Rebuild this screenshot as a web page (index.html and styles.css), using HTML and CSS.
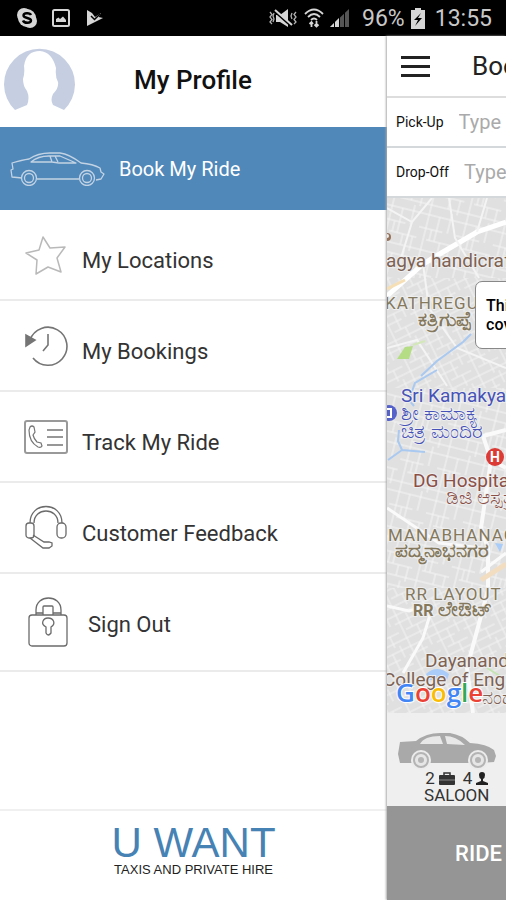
FILE: index.html
```html
<!DOCTYPE html>
<html lang="en">

<head>
    <meta charset="utf-8">
    <meta name="viewport" content="width=device-width, initial-scale=1">
    <title>U Want Taxis</title>
    <link rel="stylesheet" href="styles.css">
</head>

<body>
    <div class="status">
        <svg width="22" height="22" viewBox="0 0 22 22">
            <circle cx="8" cy="8" r="7" fill="#d6d6d6" />
            <circle cx="14" cy="14" r="7" fill="#d6d6d6" />
            <circle cx="11" cy="11" r="9" fill="#d6d6d6" />
            <path d="M15 8C14 5.500 7.500 5.500 7.500 8.500C7.500 11.500 15 10.500 15 13.500C15 16.500 8 16.500 7 13.500" fill="none" stroke="#000" stroke-width="2.400" />
        </svg>
        <svg width="18" height="18" viewBox="0 0 18 18">
            <rect x="1" y="1" width="16" height="16" rx="1.500" fill="none" stroke="#d6d6d6" stroke-width="2" />
            <path d="M4 13V10L6.500 8.500L8 10L11 7.500L14 11V13Z" fill="#d6d6d6" />
        </svg>
        <svg class="play" width="18" height="18" viewBox="0 0 18 18">
            <path d="M1 1L6 4L9 8L15 4L12.500 8L17 9L1 17Z" fill="#d6d6d6" />
            <path d="M5 7L8.500 10.500L14 5" fill="none" stroke="#000" stroke-width="1.500" />
        </svg>
        <div class="status-right">
            <svg width="30" height="20" viewBox="0 0 30 20">
                <path d="M8 7H12L20 1V19L12 14H8Z" fill="#d6d6d6" />
                <path d="M6 3L23 18" stroke="#000" stroke-width="2" />
                <path d="M7 2L24 17" stroke="#d6d6d6" stroke-width="2" />
                <path d="M2 4L4 6.500L2 9L4 11.500L2 14L4 16M6 5L5 8L6 11L5 14M28 4L26 6.500L28 9L26 11.500L28 14L26 16M24 5L23 8L24 11" fill="none" stroke="#b0b0b0" stroke-width="1.300" />
            </svg>
            <svg width="20" height="20" viewBox="0 0 20 20" fill="none" stroke="#d6d6d6" stroke-width="1.800">
                <path d="M1 6Q10 -3 19 6M4 9Q10 3 16 9M7 12Q10 9 13 12" />
                <path d="M7.500 19V14M5.500 16L7.500 14L9 16M12.500 13V18M10.500 16.500L12.500 18.500L14.500 16.500" />
            </svg>
            <svg class="signal" width="20" height="20" viewBox="0 0 20 20">
                <path d="M0 19L19 1V19Z" fill="#555" />
                <path d="M0 19L9 10V19Z" fill="#d6d6d6" />
                <path d="M4.500 14V19M9.500 9V19M14.500 4V19" stroke="#000" />
            </svg>
            <span>96%</span>
            <svg width="14" height="21" viewBox="0 0 14 21">
                <path d="M0 2H4V0H10V2H14V21H0Z" fill="#d6d6d6" />
                <path d="M10 5L3 12H7L4 18L11 10H7Z" fill="#000" />
            </svg>
            <span class="clock">13:55</span>
        </div>
    </div>

    <div class="app">
        <nav class="drawer">
            <div class="profile">
                <svg width="71" height="64" viewBox="0 0 71 64">
                    <path d="M11 62A35.500 35.500 0 1 1 60 62L49 57Q46 52 49 46Q55 40 54 34Q51 29 52 20Q48 4 36 3Q22 3 20 18Q21 25 19 31Q19 38 23 43Q26 50 23 57Z" fill="#c6cfe2" />
                </svg>
                <h1>My Profile</h1>
            </div>
            <a class="item active" href="#">
                <svg width="95" height="34" viewBox="0 0 95 34" fill="none" stroke="#c3d3e4" stroke-width="1.300" stroke-linejoin="round">
                    <path d="M12 26L2 25L1 18L3 17L2 11Q12 8 19 7Q28 1 40 1H50Q59 2 71 11Q83 12 90 16L91 20L94 22L91 27L86 28M27 27H69" />
                    <path d="M21 10Q28 4 39 4H50L66 11H49L42 10ZM40 4L42 10M45 4L48 10" />
                    <circle cx="19" cy="26" r="7.500" />
                    <circle cx="19" cy="26" r="4.500" />
                    <circle cx="77" cy="26" r="7.500" />
                    <circle cx="77" cy="26" r="4.500" />
                </svg>
                <span>Book My Ride</span>
            </a>
            <a class="item" href="#">
                <svg width="44" height="44" viewBox="0 0 44 44" fill="none" stroke="#b9b9b9" stroke-width="1.500" stroke-linejoin="round">
                    <path d="M19 4L26 15L41 14L33 25L37 39L24 34L12 41L13 27L2 20L15 17Z" />
                </svg>
                <span>My Locations</span>
            </a>
            <a class="item" href="#">
                <svg width="44" height="44" viewBox="0 0 44 44" fill="none" stroke="#757575" stroke-width="1.600">
                    <path d="M6 16A19 19 0 1 1 9 34M24 10V21L19 27" />
                    <path d="M2 11V22L11 16Z" fill="#757575" />
                </svg>
                <span>My Bookings</span>
            </a>
            <a class="item" href="#">
                <svg width="44" height="34" viewBox="0 0 44 34" fill="none" stroke="#757575" stroke-width="1.500">
                    <rect x="1" y="1" width="42" height="32" rx="2" stroke="#999" stroke-width="2" />
                    <path d="M23 10H39M23 17H39M23 25H39" />
                    <path d="M6 7Q8 5 10 7L11 12L9 15Q10 19 13 22L17 23L18 26Q17 28 14 27Q5 22 5 10Z" stroke-width="1.200" />
                </svg>
                <span>Track My Ride</span>
            </a>
            <a class="item" href="#">
                <svg width="44" height="46" viewBox="0 0 44 46" fill="none" stroke="#6b6b6b" stroke-width="1.300">
                    <path d="M6 18C6 -4 38 -4 38 18M10 18C10 2 34 2 34 18" />
                    <rect x="2" y="18" width="8" height="15" rx="3" />
                    <rect x="33" y="18" width="9" height="15" rx="4" />
                    <path d="M6 33L19 43H25L28 41V38L25 37H20L9 30" />
                </svg>
                <span>Customer Feedback</span>
            </a>
            <a class="item signout" href="#">
                <svg width="40" height="50" viewBox="0 0 40 50" fill="none" stroke="#6b6b6b" stroke-width="1.300">
                    <rect x="1" y="18" width="38" height="31" rx="3" />
                    <path d="M8 18V13C8 -3 33 -3 33 13V18M15 18V10Q15 9 16 9H24Q25 9 25 10V18" />
                    <path d="M8 16H15M25 16H33" />
                    <path d="M18 30C12 27 15 21 20 21C26 21 28 27 23 30V36Q20 40 18 36Z" />
                </svg>
                <span>Sign Out</span>
            </a>
            <div class="brand">
                <div class="brand-name">U WANT</div>
                <div class="brand-sub">TAXIS AND PRIVATE HIRE</div>
            </div>
        </nav>

        <main class="booking">
            <header>
                <button class="menu" aria-label="Menu"><i></i><i></i><i></i></button>
                <h2>Book My Ride</h2>
            </header>
            <div class="field">
                <label for="pickup">Pick-Up</label>
                <input id="pickup" type="text" placeholder="Type">
            </div>
            <div class="field">
                <label for="dropoff">Drop-Off</label>
                <input id="dropoff" type="text" placeholder="Type">
            </div>

            <div class="map">
                <svg class="tiles" width="100%" height="100%" viewBox="0 0 119 515" preserveAspectRatio="xMinYMin slice">
                    <defs>
                        <pattern id="streets" width="38" height="46" patternUnits="userSpaceOnUse" patternTransform="rotate(14)">
                            <path d="M0 6H38M0 20H24M10 31H38M0 42H38M7 0V46M18 6V31M29 0V20M34 31V46M13 20V31M24 31V42" fill="none" stroke="#f5f5f5" stroke-width="1" />
                        </pattern>
                        <pattern id="lanes" width="30" height="34" patternUnits="userSpaceOnUse" patternTransform="rotate(-26)">
                            <path d="M0 5H30M0 13H20M8 22H30M0 30H30M5 0V34M15 5V22M25 0V13M20 22V34" fill="none" stroke="#f3f3f3" stroke-width="1" />
                        </pattern>
                    </defs>
                    <rect width="119" height="515" fill="#e0e0e0" />
                    <rect width="119" height="80" fill="url(#streets)" />
                    <rect y="80" width="119" height="110" fill="url(#lanes)" />
                    <rect y="190" width="119" height="200" fill="url(#streets)" />
                    <rect y="390" width="119" height="125" fill="url(#lanes)" />
                    <path d="M0 98L36 66L56 54L90 34L119 24" fill="none" stroke="#fff" stroke-width="5" />
                    <path d="M0 91L18 82" stroke="#f6dfb5" stroke-width="3" />
                    <path d="M0 10L25 24L45 0M25 24L14 60M62 0L68 40L92 80M100 0L90 34" fill="none" stroke="#f4f4f4" stroke-width="2" />
                    <path d="M36 66L42 110L70 150L119 170M0 150L30 142L60 188" fill="none" stroke="#f4f4f4" stroke-width="2" />
                    <path d="M119 232L96 238L104 262L119 270M104 262L94 330L101 350V392L80 470L86 515" fill="none" stroke="#fafafa" stroke-width="4" />
                    <path d="M0 408L22 413L42 407M45 410L36 440L16 475M94 374L119 355M0 310L52 345L94 350" fill="none" stroke="#fafafa" stroke-width="3" />
                    <path d="M94 382L119 366" stroke="#f2ddc0" stroke-width="5" />
                    <path d="M10 161L18 149L26 148L22 161Z" fill="#b5dd85" />
                    <path d="M26 147L38 143" stroke="#d3e8b8" stroke-width="2" />
                    <path d="M34 178L50 163L76 144L84 136M50 172L28 185L22 202L27 208M12 232L11 243L15 252L1 262M15 252L38 254" fill="none" stroke="#a9c9f1" stroke-width="2" />
                    <path d="M39 476Q50 466 62 476L60 482H42ZM108 345L116 346L113 354Z" fill="#a9cdf8" />
                    <path d="M100 470L113 478" stroke="#c4e4b1" stroke-width="2" />
                    <circle cx="2" cy="215" r="8" fill="#5562ca" />
                    <path d="M0 211H4V219H0" fill="none" stroke="#fff" stroke-width="2" />
                    <circle cx="108" cy="259" r="9" fill="#dc3a35" />
                    <text class="h-mark" x="108" y="264">H</text>
                    <circle cx="0" cy="39" r="4" fill="#96715a" />
                    <circle cx="0" cy="38" r="2" fill="#eee" />
                    <g class="place brown">
                        <text x="-1" y="69">agya handicrafts</text>
                        <text x="26" y="289" class="hospital">DG Hospital</text>
                        <text x="59" y="306" class="hospital kn">ಡಿಜಿ ಆಸ್ಪತ್ರೆ</text>
                        <text x="38" y="469">Dayananda</text>
                        <text x="-4" y="488">College of Eng</text>
                        <text x="95" y="506" class="kn">ನಂದ</text>
                    </g>
                    <g class="place area">
                        <text x="-2" y="111">KATHREGUPPE</text>
                        <text x="31" y="128" class="kn">ಕತ್ರಿಗುಪ್ಪೆ</text>
                        <text x="1" y="343">MANABHANAGAR</text>
                        <text x="8" y="359" class="kn">ಪದ್ಮನಾಭನಗರ</text>
                        <text x="18" y="402">RR LAYOUT</text>
                        <text x="26" y="418" class="kn"><tspan class="latin">RR</tspan> ಲೇಔಟ್</text>
                    </g>
                    <g class="place blue">
                        <text x="14" y="204">Sri Kamakya</text>
                        <text x="14" y="222" class="kn">ಶ್ರೀ ಕಾಮಾಕ್ಯ</text>
                        <text x="14" y="240" class="kn">ಚಿತ್ರ ಮಂದಿರ</text>
                    </g>
                    <text class="google" x="9" y="504"><tspan fill="#4285f4">G</tspan><tspan fill="#ea4335">o</tspan><tspan fill="#fbbc05">o</tspan><tspan fill="#4285f4">g</tspan><tspan fill="#34a853">l</tspan><tspan fill="#ea4335">e</tspan></text>
                </svg>
                <div class="bubble">This area is<br>covered</div>
            </div>

            <div class="vehicle">
                <svg width="98" height="38" viewBox="0 0 98 38">
                    <path d="M2 10L18 9Q28 1 42 1H52Q64 3 72 11Q89 12 96 18L98 24L96 30L82 31H2L0 22Z" fill="#a9a9a9" />
                    <path d="M22 12Q26 4 42 4L45 12ZM47 4Q58 4 67 13L49 12Z" fill="#e8e8e8" />
                    <circle cx="23" cy="28" r="10" fill="#ececec" />
                    <circle cx="23" cy="28" r="7" fill="#e6e6e6" stroke="#b4b4b4" stroke-width="2" />
                    <circle cx="23" cy="28" r="3" fill="#b5b5b5" />
                    <circle cx="80" cy="28" r="10" fill="#ececec" />
                    <circle cx="80" cy="28" r="7" fill="#e6e6e6" stroke="#b4b4b4" stroke-width="2" />
                    <circle cx="80" cy="28" r="3" fill="#b5b5b5" />
                </svg>
                <div class="caption">
                    <div class="seats">
                        <span>2</span>
                        <svg width="16" height="13" viewBox="0 0 16 13">
                            <path d="M5 3V1H11V3" fill="none" stroke="#333" stroke-width="1.500" />
                            <rect y="3" width="16" height="10" rx="1" fill="#333" />
                            <path d="M0 8H16" stroke="#888" />
                        </svg>
                        <span class="people">4</span>
                        <svg width="12" height="13" viewBox="0 0 12 13">
                            <path d="M3 3Q3 0 6 0Q9 0 9 3Q9 6 7 7V9L12 11V13H0V11L5 9V7Q3 6 3 3Z" fill="#222" />
                        </svg>
                    </div>
                    <div>SALOON</div>
                </div>
            </div>
            <button class="ride">RIDE NOW</button>
        </main>
    </div>
</body>

</html>
```

FILE: styles.css
```css
* {
    box-sizing: border-box;
}

body {
    margin: 0;
    min-height: 100vh;
    display: flex;
    flex-direction: column;
    font-family: Roboto, "Liberation Sans", sans-serif;
    background: #fff;
    color: #333;
    overflow-x: hidden;
}

svg {
    flex: none;
}

h1, h2 {
    margin: 0;
    font-weight: 500;
}

.status {
    display: flex;
    align-items: center;
    gap: 14px;
    height: 36px;
    padding: 0 14px 0 16px;
    background: #000;
    color: #c8c8c8;
    font-size: 23px;
}

.play {
    margin-left: 2px;
}

.status-right {
    display: flex;
    align-items: center;
    gap: 6px;
    margin-left: auto;
}

.signal {
    margin-right: 6px;
}

.clock {
    margin-left: 4px;
}

.app {
    flex: 1;
    display: flex;
}

/* side menu */

.drawer {
    flex: none;
    width: 76.5%;
    display: flex;
    flex-direction: column;
}

.profile {
    display: flex;
    align-items: center;
    gap: 59px;
    height: 91px;
    padding: 0 4px 4px;
    color: #111;
}

.profile h1 {
    font-size: 26px;
}

.item {
    display: flex;
    align-items: center;
    gap: 14px;
    height: 91px;
    padding-left: 24px;
    border-bottom: 2px solid #ebebeb;
    color: #333;
    font-size: 22px;
    text-decoration: none;
}

.item span {
    padding-top: 12px;
}

.item.active {
    height: 83px;
    padding-left: 10px;
    border: 0;
    background: #5088b9;
    color: #fff;
    font-size: 20px;
}

.item.active span {
    padding: 0;
}

.item.signout {
    height: 98px;
    padding-left: 28px;
    gap: 20px;
}

.item.signout span {
    padding-top: 4px;
}

.brand {
    margin-top: auto;
    height: 91px;
    padding-top: 12px;
    border-top: 2px solid #f0f0f0;
    text-align: center;
    font-family: "Liberation Sans", Arial, sans-serif;
}

.brand-name {
    color: #4682b4;
    font-size: 42px;
    line-height: 40px;
}

.brand-sub {
    color: #222;
    font-size: 13px;
    line-height: 14px;
}

/* booking screen, pushed aside by the menu */

.booking {
    flex: 1;
    min-width: 0;
    display: flex;
    flex-direction: column;
    overflow: hidden;
    box-shadow: -1px 0 2px #aaa;
    white-space: nowrap;
}

.booking header {
    display: flex;
    align-items: center;
    gap: 42px;
    height: 62px;
    padding-left: 14px;
    border-bottom: 2px solid #ddd;
    color: #222;
}

.booking h2 {
    font-size: 26px;
    font-weight: 400;
}

.menu {
    flex: none;
    display: flex;
    flex-direction: column;
    gap: 6px;
    width: 29px;
    padding: 0;
    border: 0;
    background: none;
}

.menu i {
    width: 100%;
    height: 3px;
    background: #222;
}

.field {
    display: flex;
    align-items: center;
    gap: 15px;
    height: 50px;
    padding-left: 9px;
    border-bottom: 2px solid #d4d8da;
    color: #111;
    font-size: 14px;
}

.field input {
    flex: 1;
    min-width: 0;
    padding: 0;
    border: 0;
    outline: 0;
    background: none;
    font: 20px Roboto, sans-serif;
}

.field input::placeholder {
    color: #aaa;
}

.map {
    position: relative;
    flex: 1;
    min-height: 400px;
    overflow: hidden;
}

.tiles {
    position: absolute;
    top: 0;
    left: 0;
}

.place {
    font-size: 19px;
    paint-order: stroke;
    stroke: #eee;
    stroke-width: 2px;
}

.place .kn {
    font-size: 20px;
}

.place .latin {
    font-size: 16px;
}

.brown {
    fill: #7d6253;
}

.hospital {
    fill: #8a5048;
}

.area {
    fill: #84785d;
    font-size: 17px;
    letter-spacing: 1px;
}

.area .kn {
    font-weight: 700;
    letter-spacing: 0;
}

.blue {
    fill: #4652b8;
}

.h-mark {
    fill: #fff;
    font-size: 14px;
    font-weight: 700;
    text-anchor: middle;
}

.google {
    font-family: "Open Sans", sans-serif;
    font-size: 26px;
    font-weight: 600;
    paint-order: stroke;
    stroke: #fff;
    stroke-width: 2px;
}

.bubble {
    position: absolute;
    top: 83px;
    left: 88px;
    padding: 14px 10px;
    border: 1px solid #888;
    border-radius: 7px;
    background: #fff;
    color: #000;
    font-size: 16px;
    font-weight: 500;
    line-height: 19px;
}

.vehicle {
    height: 93px;
    padding: 19px 0 0 11px;
    background: #efefef;
    color: #333;
    font-size: 17px;
    line-height: 17px;
}

.vehicle svg {
    display: block;
}

.caption {
    display: flex;
    flex-direction: column;
    align-items: center;
    width: max-content;
    padding-left: 26px;
}

.seats {
    display: flex;
    align-items: center;
    gap: 4px;
}

.people {
    margin-left: 4px;
}

.ride {
    height: 94px;
    padding: 0 0 0 68px;
    border: 0;
    background: #959595;
    color: #fff;
    font: 500 22px Roboto, sans-serif;
    text-align: left;
    white-space: nowrap;
}
```
